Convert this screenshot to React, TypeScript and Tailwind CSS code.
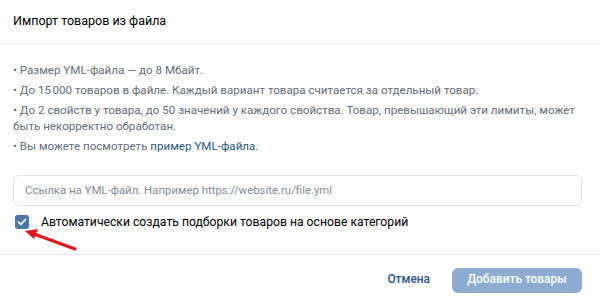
import React from "react";

export default function App() {
  const font = { fontFamily: "Roboto, 'Noto Sans', Arial, sans-serif" };
  return (
    <div className="relative w-[600px] h-[305px] bg-white overflow-hidden" style={font}>
      <div className="h-[44px] flex items-center pl-[13px] border-b border-[#e7e8ec]">
        <span className="text-[12.5px] text-black">Импорт товаров из файла</span>
      </div>
      <div className="pl-[13px] pr-[18px] pt-[18px]">
        <div className="flex flex-col gap-[4px] text-[11.6px] leading-[16px] text-[#626d7a]">
          <p>• Размер YML-файла — до 8 Мбайт.</p>
          <p>• До 15{"\u202F"}000 товаров в файле. Каждый вариант товара считается за отдельный товар.</p>
          <p>• До 2 свойств у товара, до 50 значений у каждого свойства. Товар, превышающий эти лимиты, может быть некорректно обработан.</p>
          <p>
            • Вы можете посмотреть <span className="text-[#2a5885]">пример YML-файла.</span>
          </p>
        </div>
        <div className="mt-[21px] h-[31px] rounded-[6px] border border-[#e1e3e6] bg-white flex items-center px-[11px]">
          <span className="text-[11.4px] text-[#818c99]">Ссылка на YML-файл. Например https://website.ru/file.yml</span>
        </div>
        <div className="mt-[9px] flex items-center h-[14px]">
          <div className="ml-[2px] w-[14px] h-[14px] rounded-[3px] bg-[#4a76a8] flex items-center justify-center">
            <svg width="10" height="8" viewBox="0 0 10 8">
              <path d="M1.5 4.2 L3.8 6.3 L8.5 1.5" stroke="white" strokeWidth="1.7" fill="none" strokeLinecap="round" strokeLinejoin="round" />
            </svg>
          </div>
          <span className="ml-[12px] text-[12.2px] text-black">Автоматически создать подборки товаров на основе категорий</span>
        </div>
      </div>
      <div className="absolute left-0 right-0 top-[254px] border-t border-[#e7e8ec] h-[51px] flex items-center justify-end pr-[18px]">
        <span className="text-[11.9px] font-medium text-[#2a5885] mr-[22px]">Отмена</span>
        <div className="h-[25px] w-[130px] rounded-[6px] bg-[#8eacd2] flex items-center justify-center text-white text-[11.9px] font-medium">
          Добавить товары
        </div>
      </div>
      <svg className="absolute left-0 top-0 pointer-events-none" width="600" height="305">
        <line x1="75" y1="249" x2="34" y2="234" stroke="#e8151c" strokeWidth="3" strokeLinecap="round" />
        <polygon points="25,231 38,229 34,239" fill="#e8151c" />
      </svg>
    </div>
  );
}
